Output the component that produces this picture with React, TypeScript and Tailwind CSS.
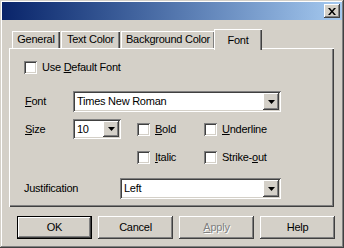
import React from "react";

const raised =
  "shadow-[inset_-1px_-1px_0_#404040,inset_1px_1px_0_#ffffff,inset_-2px_-2px_0_#808080,inset_2px_2px_0_#d4d0c8]";
const sunken =
  "shadow-[inset_1px_1px_0_#808080,inset_-1px_-1px_0_#ffffff,inset_2px_2px_0_#404040,inset_-2px_-2px_0_#d4d0c8]";
const tabEdge =
  "shadow-[inset_1px_1px_0_#ffffff,inset_-1px_0_0_#404040,inset_-2px_0_0_#808080]";

function Key({ children }: { children: React.ReactNode }) {
  return <span className="underline underline-offset-[1px]">{children}</span>;
}

function CheckBox({ children }: { children: React.ReactNode }) {
  return (
    <div className="flex items-center h-[13px]">
      <div className={`w-[13px] h-[13px] bg-white ${sunken}`} />
      <span className="ml-[5px] leading-none">{children}</span>
    </div>
  );
}

function Arrow() {
  return (
    <div className={`w-[16px] h-full bg-[#d4d0c8] flex items-center justify-center ${raised}`}>
      <svg width="7" height="4" viewBox="0 0 7 4">
        <path d="M0 0h7L3.5 4z" fill="#000" />
      </svg>
    </div>
  );
}

function Combo({ value, className }: { value: string; className: string }) {
  return (
    <div className={`flex bg-white p-[2px] ${sunken} ${className}`}>
      <div className="flex-1 flex items-center pl-[2px]">{value}</div>
      <Arrow />
    </div>
  );
}

function Button({ children, isDefault, disabled }: { children: React.ReactNode; isDefault?: boolean; disabled?: boolean }) {
  return (
    <div className={`w-[75px] h-[23px] flex ${isDefault ? "border border-black" : ""}`}>
      <div className={`w-full h-full flex items-center justify-center ${raised}`}>
        <span className={disabled ? "text-[#808080] [text-shadow:1px_1px_0_#fff]" : ""}>{children}</span>
      </div>
    </div>
  );
}

export default function App() {
  const tabs = [
    { label: "General", w: "w-[48px]" },
    { label: "Text Color", w: "w-[59px]" },
    { label: "Background Color", w: "w-[94px]" },
  ];

  return (
    <div className="w-[344px] h-[248px] bg-[#d4d0c8] p-[2px] text-[11px] tracking-[-0.25px] text-black font-['Liberation_Sans',Arial,sans-serif] shadow-[inset_-1px_-1px_0_#404040,inset_1px_1px_0_#d4d0c8,inset_-2px_-2px_0_#808080,inset_2px_2px_0_#ffffff] flex flex-col">
      {/* Title bar */}
      <div className="h-[18px] bg-gradient-to-r from-[#0a246a] to-[#a6caf0] flex items-center justify-end pr-[2px]">
        <div className={`w-[16px] h-[14px] bg-[#d4d0c8] flex items-center justify-center ${raised}`}>
          <svg width="8" height="7" viewBox="0 0 8 7">
            <path d="M0 0h2l2 2.5L6 0h2L5 3.5 8 7H6L4 4.5 2 7H0l3-3.5z" fill="#000" />
          </svg>
        </div>
      </div>

      {/* Tabs */}
      <div className="mt-[9px] ml-[9px] h-[19px] flex items-start">
        {tabs.map((t) => (
          <div
            key={t.label}
            className={`ml-[1px] mt-[2px] h-[17px] ${t.w} flex items-center justify-center whitespace-nowrap ${tabEdge}`}
          >
            {t.label}
          </div>
        ))}
        <div className={`relative z-10 -ml-[1px] h-[21px] w-[48px] bg-[#d4d0c8] flex justify-center pt-[3px] ${tabEdge}`}>
          Font
        </div>
      </div>

      {/* Panel */}
      <div className="ml-[7px] w-[325px] h-[159px] flex flex-col pl-[15px] shadow-[inset_1px_1px_0_#ffffff,inset_-1px_-1px_0_#404040,inset_-2px_-2px_0_#808080]">
        <div className="mt-[13px]">
          <CheckBox>
            Use <Key>D</Key>efault Font
          </CheckBox>
        </div>

        <div className="mt-[17px] h-[21px] flex items-center">
          <span className="w-[49px] pl-[1px]">
            <Key>F</Key>ont
          </span>
          <Combo value="Times New Roman" className="w-[208px] h-[21px]" />
        </div>

        <div className="mt-[7px] h-[20px] flex items-center">
          <span className="w-[49px] pl-[1px]">
            <Key>S</Key>ize
          </span>
          <Combo value="10" className="w-[48px] h-[20px]" />
          <div className="ml-[16px] w-[67px]">
            <CheckBox>
              <Key>B</Key>old
            </CheckBox>
          </div>
          <CheckBox>
            <Key>U</Key>nderline
          </CheckBox>
        </div>

        <div className="mt-[12px] h-[13px] flex items-center pl-[113px]">
          <div className="w-[67px]">
            <CheckBox>
              <Key>I</Key>talic
            </CheckBox>
          </div>
          <CheckBox>
            Strike-<Key>o</Key>ut
          </CheckBox>
        </div>

        <div className="mt-[14px] h-[21px] flex items-center">
          <span className="w-[96px]">Justification</span>
          <Combo value="Left" className="w-[161px] h-[21px]" />
        </div>
      </div>

      {/* Buttons */}
      <div className="mt-[9px] ml-[15px] flex gap-[6px]">
        <Button isDefault>OK</Button>
        <Button>Cancel</Button>
        <Button disabled>
          <Key>A</Key>pply
        </Button>
        <Button>Help</Button>
      </div>
    </div>
  );
}
